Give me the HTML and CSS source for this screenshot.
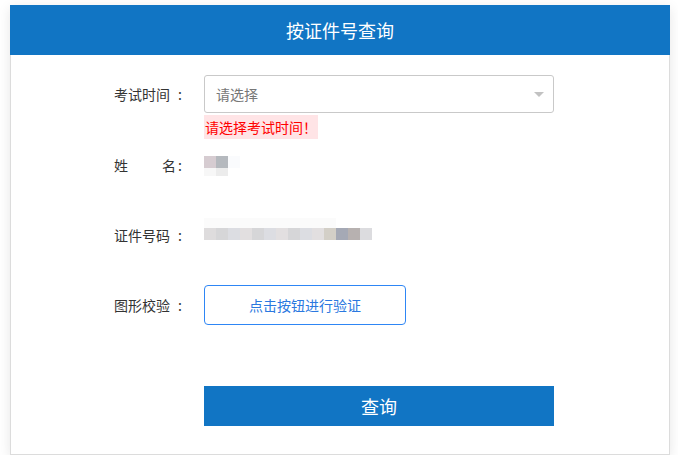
FILE: index.html
```html
<!DOCTYPE html>
<html lang="zh-CN">
<head>
<meta charset="utf-8">
<title>按证件号查询</title>
<link rel="stylesheet" href="styles.css">
</head>
<body>
<div class="panel">
  <div class="panel-head">按证件号查询</div>
  <div class="panel-body">
    <div class="row row-select">
      <div class="label"><span class="label-text">考试时间</span><span class="colon">:</span></div>
      <div class="field">
        <div class="select">
          <span class="placeholder">请选择</span>
          <span class="arrow"></span>
        </div>
      </div>
    </div>
    <div class="row row-error">
      <div class="label"></div>
      <div class="field"><span class="error">请选择考试时间！</span></div>
    </div>
    <div class="row row-name">
      <div class="label"><span class="label-text">姓<span class="name-gap"></span>名</span><span class="colon">:</span></div>
      <div class="field">
        <div class="mosaic name-mosaic">
          <div class="mrow h12"><span class="b n1"></span><span class="b n2"></span><span class="b n3"></span></div>
          <div class="mrow h8"><span class="b n4"></span><span class="b n5"></span></div>
        </div>
      </div>
    </div>
    <div class="row row-id">
      <div class="label"><span class="label-text">证件号码</span><span class="colon">:</span></div>
      <div class="field">
        <div class="mosaic id-mosaic">
          <div class="mrow h10"><span class="strip"></span></div>
          <div class="mrow h12">
            <span class="b i1"></span><span class="b i2"></span><span class="b i3"></span><span class="b i4"></span><span class="b i2"></span><span class="b i3"></span><span class="b i4"></span><span class="b i2"></span><span class="b i3"></span><span class="b i4"></span><span class="b i5"></span><span class="b i6"></span><span class="b i7"></span><span class="b i8"></span>
          </div>
        </div>
      </div>
    </div>
    <div class="row row-captcha">
      <div class="label"><span class="label-text">图形校验</span><span class="colon">:</span></div>
      <div class="field"><button class="verify-btn" type="button">点击按钮进行验证</button></div>
    </div>
    <div class="row row-submit">
      <div class="label"></div>
      <div class="field"><button class="submit-btn" type="button">查询</button></div>
    </div>
  </div>
</div>
</body>
</html>
```
FILE: styles.css
```css
* { box-sizing: border-box; }
html, body { margin: 0; padding: 0; background: #fff; }
body {
  font-family: "Noto Sans CJK SC", "Microsoft YaHei", "Liberation Sans", sans-serif;
  font-size: 14px;
  color: #333;
  padding: 5px 8px 0 10px;
}
.panel {
  width: 660px;
  box-shadow: 0 3px 12px rgba(0, 0, 0, 0.1);
}
.panel-head {
  height: 50px;
  background: #1175c4;
  color: #fff;
  font-size: 18px;
  line-height: 50px;
  text-align: center;
}
.panel-body {
  border: 1px solid #dcdcdc;
  border-top: none;
  padding: 20px 0 28px 103px;
  display: flex;
  flex-direction: column;
}
.row {
  display: flex;
  align-items: center;
}
.label {
  width: 68px;
  margin-right: 22px;
  display: flex;
  justify-content: space-between;
  align-items: center;
  line-height: 20px;
}
.label-text { display: flex; }
.name-gap { display: inline-block; width: 34px; }
.field { width: 350px; }

.row-select { height: 38px; }
.select {
  height: 38px;
  border: 1px solid #c9c9c9;
  border-radius: 3px;
  display: flex;
  align-items: center;
  justify-content: space-between;
  padding: 0 9px 0 11px;
}
.placeholder { color: #777; }
.arrow {
  width: 0;
  height: 0;
  border-left: 5px solid transparent;
  border-right: 5px solid transparent;
  border-top: 5px solid #c2c2c2;
}

.row-error { margin-top: 2px; height: 24px; }
.error {
  display: inline-block;
  padding-left: 1px;
  padding-right: 1px;
  background: #ffe4e6;
  color: #f00;
  line-height: 24px;
  height: 24px;
}

.row-name { margin-top: 6px; height: 40px; }
.row-id { margin-top: 30px; height: 40px; }
.row-captcha { margin-top: 30px; height: 40px; }
.row-submit { margin-top: 61px; height: 40px; }

.mosaic { display: flex; flex-direction: column; }
.name-mosaic { margin-top: 2px; }
.id-mosaic { margin-top: -12px; }
.mrow { display: flex; }
.h12 { height: 12px; }
.h8 { height: 8px; }
.h10 { height: 10px; }
.b { width: 12px; height: 100%; }
.strip { width: 132px; height: 100%; background: #fbfbfb; }
.n1 { background: #d6ccd1; }
.n2 { background: #b5b9be; }
.n3 { background: #fafbfd; }
.n4 { background: #f7f7f7; }
.n5 { background: #ececec; }
.i1 { background: #dedcdd; }
.i2 { background: #d6d6d8; }
.i3 { background: #dcdde2; }
.i4 { background: #e2dfe0; }
.i5 { background: #d3cfc7; }
.i6 { background: #a5a9b5; }
.i7 { background: #b7b1b0; }
.i8 { background: #dcdcdf; }

.verify-btn {
  width: 202px;
  height: 40px;
  border: 1px solid #2e86f5;
  border-radius: 4px;
  background: #fff;
  color: #2a78e0;
  font-family: inherit;
  font-size: 14px;
  padding: 0;
  cursor: pointer;
}
.submit-btn {
  width: 350px;
  height: 40px;
  border: none;
  background: #1175c4;
  color: #fff;
  font-family: inherit;
  font-size: 18px;
  padding: 0;
  cursor: pointer;
}
```
